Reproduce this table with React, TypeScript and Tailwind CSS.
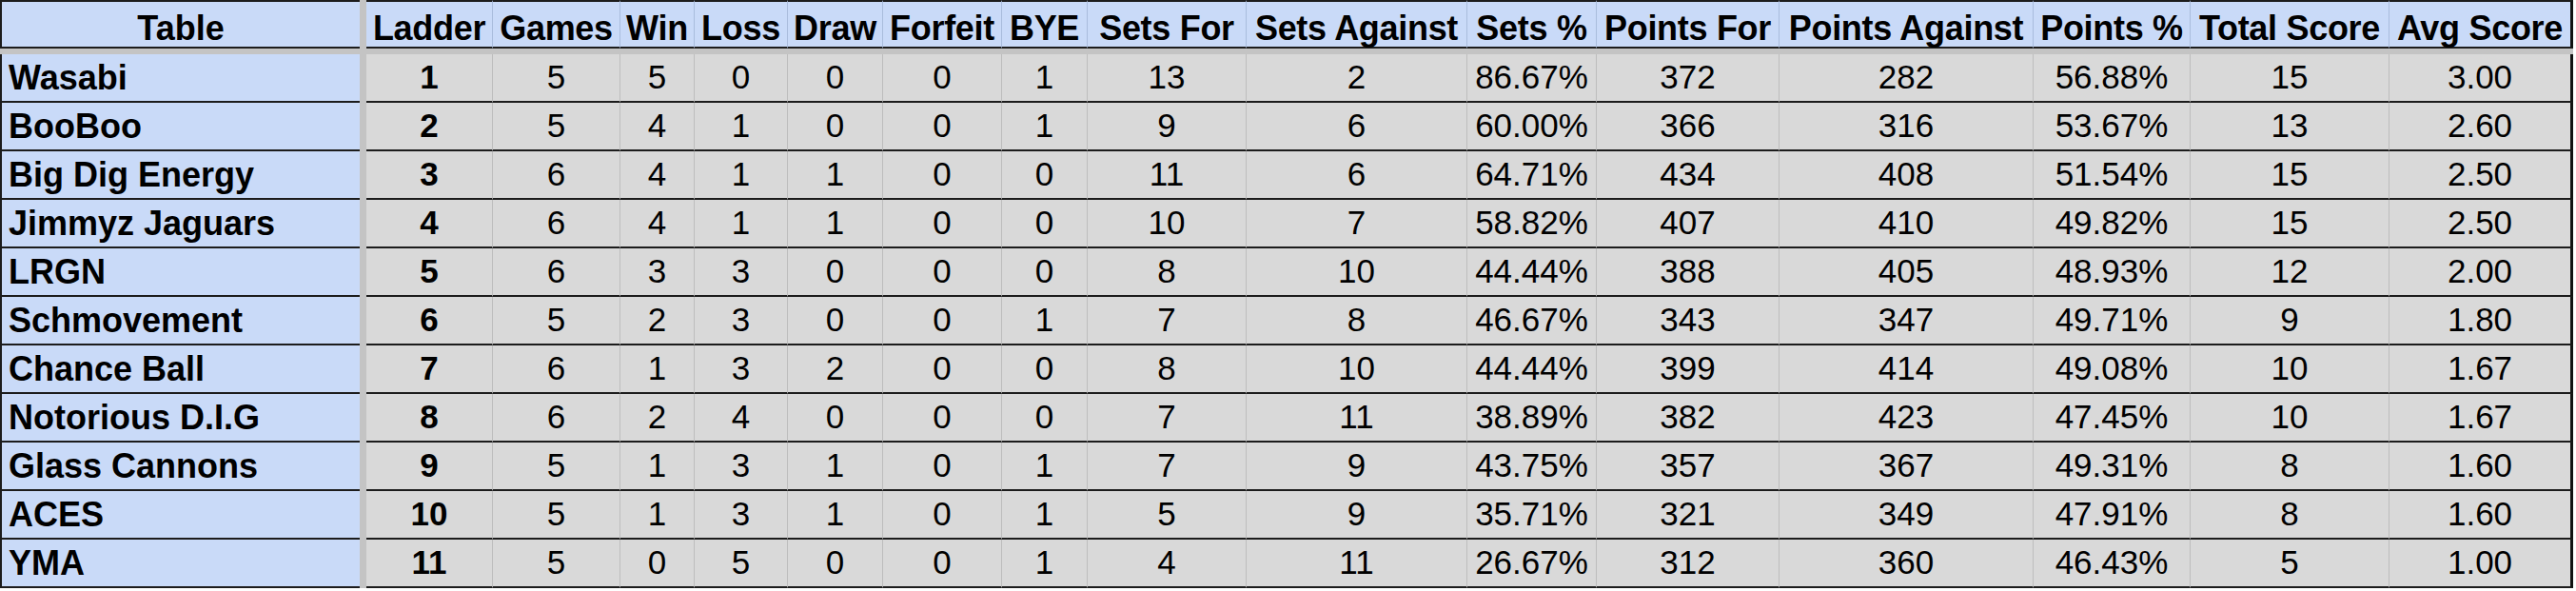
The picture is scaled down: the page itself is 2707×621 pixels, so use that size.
import React from "react";

type Col = { label: string; w: string; bold?: boolean };

const cols: Col[] = [
  { label: "Ladder", w: "w-[133px]", bold: true },
  { label: "Games", w: "w-[134px]" },
  { label: "Win", w: "w-[78px]" },
  { label: "Loss", w: "w-[98px]" },
  { label: "Draw", w: "w-[100px]" },
  { label: "Forfeit", w: "w-[125px]" },
  { label: "BYE", w: "w-[90px]" },
  { label: "Sets For", w: "w-[167px]" },
  { label: "Sets Against", w: "w-[232px]" },
  { label: "Sets %", w: "w-[136px]" },
  { label: "Points For", w: "w-[192px]" },
  { label: "Points Against", w: "w-[267px]" },
  { label: "Points %", w: "w-[165px]" },
  { label: "Total Score", w: "w-[209px]" },
  { label: "Avg Score", w: "w-[193px]" },
];

const rows: [string, ...string[]][] = [
  ["Wasabi", "1", "5", "5", "0", "0", "0", "1", "13", "2", "86.67%", "372", "282", "56.88%", "15", "3.00"],
  ["BooBoo", "2", "5", "4", "1", "0", "0", "1", "9", "6", "60.00%", "366", "316", "53.67%", "13", "2.60"],
  ["Big Dig Energy", "3", "6", "4", "1", "1", "0", "0", "11", "6", "64.71%", "434", "408", "51.54%", "15", "2.50"],
  ["Jimmyz Jaguars", "4", "6", "4", "1", "1", "0", "0", "10", "7", "58.82%", "407", "410", "49.82%", "15", "2.50"],
  ["LRGN", "5", "6", "3", "3", "0", "0", "0", "8", "10", "44.44%", "388", "405", "48.93%", "12", "2.00"],
  ["Schmovement", "6", "5", "2", "3", "0", "0", "1", "7", "8", "46.67%", "343", "347", "49.71%", "9", "1.80"],
  ["Chance Ball", "7", "6", "1", "3", "2", "0", "0", "8", "10", "44.44%", "399", "414", "49.08%", "10", "1.67"],
  ["Notorious D.I.G", "8", "6", "2", "4", "0", "0", "0", "7", "11", "38.89%", "382", "423", "47.45%", "10", "1.67"],
  ["Glass Cannons", "9", "5", "1", "3", "1", "0", "1", "7", "9", "43.75%", "357", "367", "49.31%", "8", "1.60"],
  ["ACES", "10", "5", "1", "3", "1", "0", "1", "5", "9", "35.71%", "321", "349", "47.91%", "8", "1.60"],
  ["YMA", "11", "5", "0", "5", "0", "0", "1", "4", "11", "26.67%", "312", "360", "46.43%", "5", "1.00"],
];

function Divider() {
  return <div className="w-[7px] shrink-0 self-stretch bg-[#c4c4c4]" />;
}

export default function App() {
  return (
    <div className="w-[2707px] h-[621px] bg-white text-black font-['Liberation_Sans',Arial,sans-serif] overflow-hidden">
      {/* header */}
      <div className="flex h-[51px]">
        <div className="w-[378px] shrink-0 flex items-center justify-center pt-2 bg-[#c9daf8] border-t-2 border-b-2 border-l-2 border-[#1c1c1c] text-[36px] font-bold">
          Table
        </div>
        <Divider />
        {cols.map((c, i) => (
          <div
            key={c.label}
            className={`${c.w} shrink-0 flex items-center justify-center pt-2 bg-[#c9daf8] border-t-2 border-b-2 border-t-[#1c1c1c] border-b-[#1c1c1c] whitespace-nowrap text-[36px] font-bold tracking-[-0.3px] ${
              i === cols.length - 1 ? "border-r-[3px] border-r-[#111]" : "border-r border-r-[#a9bcdc]"
            }`}
          >
            {c.label}
          </div>
        ))}
      </div>
      <div className="h-[6px] w-[2704px] bg-[#c4c4c4]" />
      {/* body */}
      {rows.map(([team, ...vals]) => (
        <div key={team} className="flex h-[51px]">
          <div className="w-[378px] shrink-0 flex items-center pl-[7px] bg-[#c9daf8] border-b-2 border-l-2 border-[#1c1c1c] text-[36px] font-bold whitespace-nowrap">
            {team}
          </div>
          <Divider />
          {vals.map((v, i) => (
            <div
              key={i}
              className={`${cols[i].w} shrink-0 flex items-center justify-center bg-[#d9d9d9] border-b-2 border-b-[#1c1c1c] text-[35px] ${
                cols[i].bold ? "font-bold" : "font-normal"
              } ${i === vals.length - 1 ? "border-r-[3px] border-r-[#111]" : "border-r border-r-[#bdbdbd]"}`}
            >
              {v}
            </div>
          ))}
        </div>
      ))}
    </div>
  );
}
